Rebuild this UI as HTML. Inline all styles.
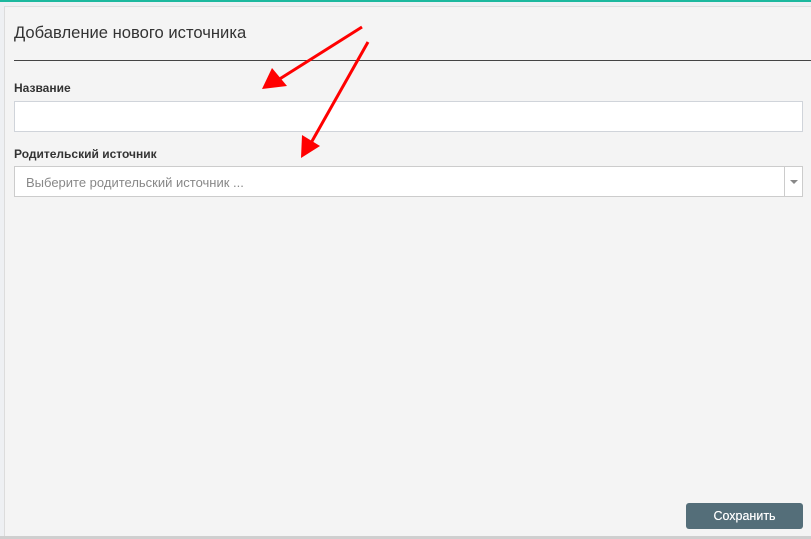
<!DOCTYPE html>
<html><head><meta charset="utf-8"><style>
html,body{margin:0;padding:0;width:811px;height:539px;overflow:hidden;background:#eef0f3;font-family:"Liberation Sans","DejaVu Sans",sans-serif;}
.top{position:absolute;left:0;top:0;width:811px;height:2px;background:#1cb89e;}
.panel{position:absolute;left:4px;top:6px;width:807px;height:531px;background:#f4f4f4;border-left:1px solid #dcdcdc;border-top:1px solid #e0e0e0;}
.bottom{position:absolute;left:0;top:536px;width:811px;height:3px;background:#cfcfcf;}
h1{position:absolute;left:14px;top:23px;margin:0;font-weight:normal;font-size:16.6px;color:#333;}
.hr{position:absolute;left:14px;top:60px;width:797px;height:1px;background:#444;}
.lbl{position:absolute;left:14px;font-size:12px;font-weight:bold;color:#333;}
.inp{position:absolute;left:14px;width:787px;background:#fff;border:1px solid #d0d4da;}
.ph{position:absolute;left:11px;top:8px;font-size:13px;color:#888;}
.dd{position:absolute;right:0;top:0;width:17px;height:29px;border-left:1px solid #ccc;}
.dd:after{content:"";position:absolute;left:5px;top:13px;border-left:4px solid transparent;border-right:4px solid transparent;border-top:4px solid #888;}
.btn{position:absolute;left:686px;top:503px;width:117px;height:26px;background:#546e79;border-radius:3px;color:#fff;font-size:12.5px;text-align:center;line-height:26px;text-shadow:0 0 0.4px #fff;}
</style></head><body>
<div class="top"></div>
<div class="panel"></div>
<div class="bottom"></div>
<h1>Добавление нового источника</h1>
<div class="hr"></div>
<div class="lbl" style="top:81px">Название</div>
<div class="inp" style="top:101px;height:29px"></div>
<div class="lbl" style="top:147px">Родительский источник</div>
<div class="inp" style="top:166px;height:29px;border-color:#ccc"><span class="ph">Выберите родительский источник ...</span><div class="dd"></div></div>
<div class="btn">Сохранить</div>
<svg style="position:absolute;left:0;top:0" width="811" height="539">
<line x1="362" y1="27" x2="278" y2="80" stroke="#f00" stroke-width="3"/>
<polygon points="262,89 272,68 287,86" fill="#f00"/>
<line x1="368" y1="42" x2="311" y2="143" stroke="#f00" stroke-width="3"/>
<polygon points="301,158 302,135 320,146" fill="#f00"/>
</svg>
</body></html>
